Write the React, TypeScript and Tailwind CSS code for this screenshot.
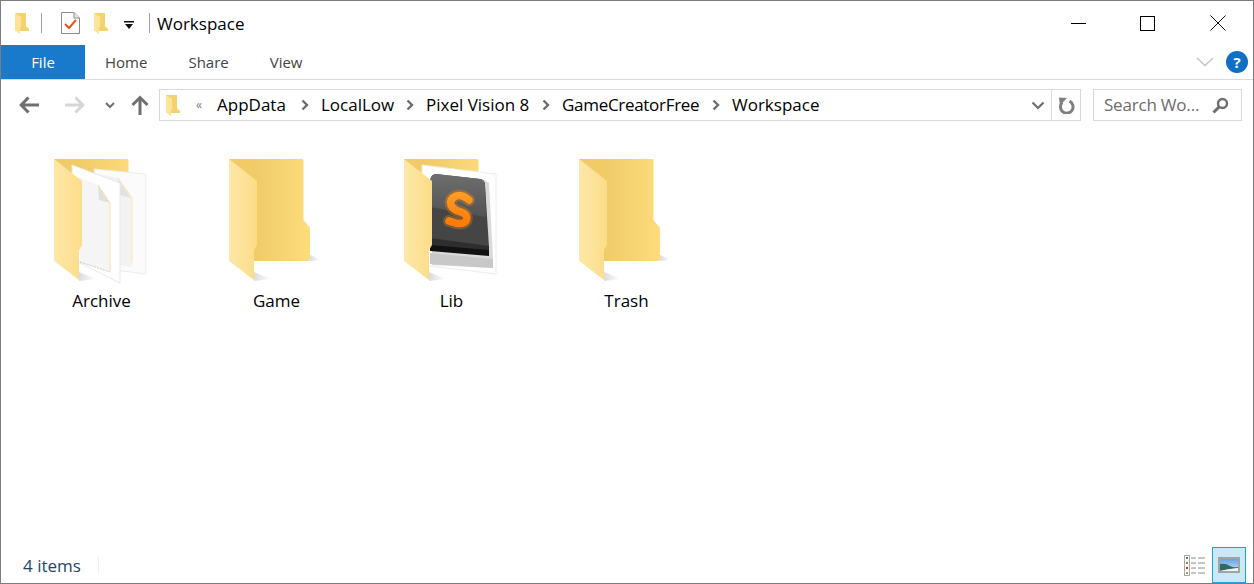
const ui = "font-['Open_Sans','Noto_Sans',sans-serif]";

function SmallFolder() {
  return (
    <svg width="14" height="21" viewBox="0 0 14 21" className="block">
      <path d="M0 0 L11 0 L11 13 L14 16 L14 18 L5 18 L5 21 L0 17 Z" fill="#f6d26f" />
      <path d="M0 0 L6 4 L6 14 L5 15 L5 21 L0 17 Z" fill="#fee39b" />
    </svg>
  );
}

function Chevron() {
  return (
    <svg width="8" height="12" viewBox="0 0 8 12" className="ml-[13px] mr-[12px] shrink-0">
      <path d="M1.5 1.5 L6 6 L1.5 10.5" fill="none" stroke="#6d6d6d" strokeWidth="2.4" />
    </svg>
  );
}

function Arrow({ color, flip }: { color: string; flip?: boolean }) {
  return (
    <svg width="20" height="18" viewBox="0 0 20 18" className={flip ? "rotate-180" : ""}>
      <path d="M9.5 1.5 L2.2 9 L9.5 16.5 M3 9 L20 9" fill="none" stroke={color} strokeWidth="3" />
    </svg>
  );
}

function SublimeCard() {
  return (
    <g>
      <defs>
        <linearGradient id="key-top" x1="0" x2="0" y1="0" y2="1">
          <stop offset="0" stopColor="#6e6e6e" />
          <stop offset="1" stopColor="#525252" />
        </linearGradient>
        <linearGradient id="s-stroke" x1="0" x2="0" y1="0" y2="1">
          <stop offset="0" stopColor="#ff9a22" />
          <stop offset="1" stopColor="#ff7a06" />
        </linearGradient>
      </defs>
      <path d="M18 6 L92 15 L92 115 L18 106 Z" fill="#ffffff" stroke="#ececec" strokeWidth="1" />
      <path d="M28 106 L88 109 L89 100 L85 24 L78 20 L28 16 Z" fill="#d9d9d9" />
      <path d="M26 94 L89 100 L89 109 L26 105 Z" fill="#c8c8c8" />
      <path d="M32 15 L76 20 Q81 21 81 26 L85 88 L85 96 L26 91 L26 22 Q27 15 32 15 Z" fill="#454545" />
      <path d="M32 15 L76 20 Q81 21 81 26 L82 58 L26 48 L26 22 Q27 15 32 15 Z" fill="url(#key-top)" />
      <path d="M26 79 L85 87 L85 92 L26 87 Z" fill="#2e2e2e" />
      <path d="M26 86 L85 91 L85 97 L26 92 Z" fill="#111111" />
      <path d="M65 41 Q58 35 52 37 Q45 40 47 46 Q49 51 57 53 Q65 56 62 62 Q58 67 45 62" fill="none" stroke="#ff8a18" strokeOpacity="0.3" strokeWidth="12" strokeLinecap="round" />
      <path d="M65 41 Q58 35 52 37 Q45 40 47 46 Q49 51 57 53 Q65 56 62 62 Q58 67 45 62" fill="none" stroke="url(#s-stroke)" strokeWidth="7.5" strokeLinecap="round" />
    </g>
  );
}

function PaperSheets() {
  return (
    <g>
      <path d="M40 10 L92 15 L92 115 L60 111 Z" fill="#fbfbfb" stroke="#ededed" strokeWidth="1" />
      <path d="M39 14 L64 19 L78 39 L78 108 L40 103 Z" fill="#f3f3f3" />
      <path d="M64 19 L78 39 L78 104" fill="none" stroke="#fae7aa" strokeWidth="1" />
      <path d="M64 20 L65 36 L77 39 Z" fill="#e2e2e2" />
      <path d="M18 6 L66 24 L66 124 L18 100 Z" fill="#ffffff" stroke="#e9e9e9" strokeWidth="1" />
      <path d="M24 18 L44 26 L56 44 L56 112 L26 103 Z" fill="#f5f5f5" />
      <path d="M44 26 L45 41 L56 44 Z" fill="#e0e0e0" />
      <path d="M44 26 L56 44 L56 112" fill="none" stroke="#fae3a0" strokeWidth="1" />
      <path d="M26 103 L56 113" fill="none" stroke="#c6c6c6" strokeWidth="1" strokeDasharray="2 1" />
    </g>
  );
}

function Folder({ name, inner }: { name: string; inner?: React.ReactNode }) {
  return (
    <div className="flex w-[175px] flex-col items-center">
      <svg width="110" height="125" viewBox="0 0 110 125" className="ml-[15px] block">
        <defs>
          <linearGradient id={`back-${name}`} x1="0" x2="1" y1="0" y2="0">
            <stop offset="0.3" stopColor="#f0cb68" />
            <stop offset="1" stopColor="#fddc7c" />
          </linearGradient>
          <linearGradient id={`front-${name}`} x1="0" x2="1" y1="0" y2="0">
            <stop offset="0" stopColor="#fee8a8" />
            <stop offset="1" stopColor="#fcdc88" />
          </linearGradient>
          <linearGradient id={`shade-${name}`} x1="0" x2="1" y1="0" y2="0">
            <stop offset="0" stopColor="#dcdcdc" />
            <stop offset="1" stopColor="#ffffff" />
          </linearGradient>
        </defs>
        <path d="M81 96 L92 101 L81 102 Z" fill={`url(#shade-${name})`} />
        <path d="M25 113 L42 120 L25 122 Z" fill={`url(#shade-${name})`} />
        <path d="M0 0 L73 0 Q74.5 0 74.5 2 L74.5 61 L81 69 L81 100 Q81 102 79 102 L25 102 L0 90 Z" fill={`url(#back-${name})`} />
        {inner}
        <path d="M0 0 L28 22 L28 86 L25 91 L25 121 L0 102 Z" fill={`url(#front-${name})`} />
      </svg>
      <span className={`${ui} mt-[6px] text-[17px] leading-[22px] text-black`}>{name}</span>
    </div>
  );
}

const crumbs = [
  { label: "AppData", width: "w-[71px]" },
  { label: "LocalLow", width: "w-[72px]" },
  { label: "Pixel Vision 8", width: "w-[103px]" },
  { label: "GameCreatorFree", width: "w-[137px] tracking-[-0.3px]" },
  { label: "Workspace", width: "w-[87px]" },
];

export default function App() {
  return (
    <div className={`${ui} flex h-[584px] w-[1254px] flex-col overflow-hidden border border-[#7d7d7d] bg-white text-black`}>
      {/* title bar */}
      <div className="flex h-[44px] shrink-0 items-center pl-[14px]">
        <SmallFolder />
        <div className="ml-[12px] h-[20px] w-px bg-[#a0a0a0]" />
        <svg width="19" height="22" viewBox="0 0 19 22" className="ml-[19px]">
          <path d="M0.5 0.5 L13 0.5 L18.5 6 L18.5 21.5 L0.5 21.5 Z" fill="#fff" stroke="#8c8c8c" />
          <path d="M13 0.5 L13 6 L18.5 6" fill="#e8e8e8" stroke="#8c8c8c" />
          <path d="M4 12 L8 16 L15 8" fill="none" stroke="#e8561e" strokeWidth="2" />
        </svg>
        <div className="ml-[14px]"><SmallFolder /></div>
        <svg width="10" height="9" viewBox="0 0 10 9" className="ml-[16px] mt-[5px]">
          <rect x="0" y="0" width="10" height="1.5" fill="#111" />
          <path d="M1 3 L9 3 L5 8 Z" fill="#111" />
        </svg>
        <div className="ml-[15px] h-[20px] w-px bg-[#a0a0a0]" />
        <span className="ml-[7px] text-[17px] leading-none">Workspace</span>
        <div className="ml-auto flex items-center">
          <div className="h-px w-[15px] bg-black" />
          <div className="ml-[54px] h-[15px] w-[15px] border border-black" />
          <svg width="16" height="16" viewBox="0 0 16 16" className="ml-[55px] mr-[27px]">
            <path d="M0.5 0.5 L15.5 15.5 M15.5 0.5 L0.5 15.5" stroke="#111" strokeWidth="1" />
          </svg>
        </div>
      </div>

      {/* ribbon tabs */}
      <div className="flex h-[35px] shrink-0 items-center border-b border-[#dadada] text-[15px] text-[#444]">
        <div className="flex h-full w-[84px] items-center justify-center bg-[#1979ca] text-white">File</div>
        <span className="ml-[20px]">Home</span>
        <span className="ml-[41px]">Share</span>
        <span className="ml-[41px]">View</span>
        <div className="ml-auto flex items-center">
          <svg width="18" height="10" viewBox="0 0 18 10" className="mr-[12px]">
            <path d="M1 1 L9 8.5 L17 1" fill="none" stroke="#c3c3c3" strokeWidth="1.4" />
          </svg>
          <div className="mr-[5px] flex h-[22px] w-[22px] items-center justify-center rounded-full bg-[#0f6fc6] text-[15px] font-bold text-white">?</div>
        </div>
      </div>

      {/* address row */}
      <div className="flex h-[50px] shrink-0 items-center">
        <div className="ml-[18px]"><Arrow color="#6f6f6f" /></div>
        <div className="ml-[26px]"><Arrow color="#d6d6d6" flip /></div>
        <svg width="10" height="7" viewBox="0 0 10 7" className="ml-[20px]">
          <path d="M1 1 L5 5 L9 1" fill="none" stroke="#6f6f6f" strokeWidth="2" />
        </svg>
        <svg width="18" height="20" viewBox="0 0 18 20" className="ml-[16px]">
          <path d="M1.5 10 L9 2.5 L16.5 10 M9 3 L9 20" fill="none" stroke="#6f6f6f" strokeWidth="3" />
        </svg>
        <div className="ml-[10px] flex h-[32px] w-[922px] items-center border border-[#d9d9d9]">
          <div className="ml-[6px]"><SmallFolder /></div>
          <span className="ml-[16px] w-[21px] text-[12px] leading-none text-[#7a7a7a]">«</span>
          <div className="flex items-center text-[17px]">
            {crumbs.map((c, i) => (
              <div key={c.label} className="flex items-center">
                <span className={`${c.width} whitespace-nowrap`}>{c.label}</span>
                {i < crumbs.length - 1 && <Chevron />}
              </div>
            ))}
          </div>
          <div className="ml-auto flex h-full items-center">
            <svg width="14" height="9" viewBox="0 0 14 9" className="mr-[6px]">
              <path d="M1.5 1.5 L7 7 L12.5 1.5" fill="none" stroke="#6f6f6f" strokeWidth="2.2" />
            </svg>
            <div className="flex h-full w-[29px] items-center justify-center border-l border-[#d9d9d9]">
              <svg width="17" height="17" viewBox="0 0 17 17">
                <path d="M11.5 4.2 A6.3 6.3 0 1 1 4.2 5.5" fill="none" stroke="#7f7f7f" strokeWidth="3" />
                <path d="M1 0.5 L9 1 L2 8.5 Z" fill="#7f7f7f" />
              </svg>
            </div>
          </div>
        </div>
        <div className="ml-[12px] flex h-[32px] w-[149px] items-center border border-[#d9d9d9] pl-[10px] pr-[12px] text-[17px] text-[#6d6d6d]">
          <span className="whitespace-nowrap tracking-[-0.2px]">Search Wo...</span>
          <svg width="17" height="17" viewBox="0 0 17 17" className="ml-auto">
            <circle cx="10.5" cy="6.5" r="4.5" fill="none" stroke="#6f6f6f" strokeWidth="2.4" />
            <path d="M7 10 L1.5 15.5" stroke="#6f6f6f" strokeWidth="3" />
          </svg>
        </div>
      </div>

      {/* folder grid */}
      <div className="flex flex-1 items-start pl-[13px] pt-[29px]">
        <Folder name="Archive" inner={<PaperSheets />} />
        <Folder name="Game" />
        <Folder name="Lib" inner={<SublimeCard />} />
        <Folder name="Trash" />
      </div>

      {/* status bar */}
      <div className="flex h-[36px] shrink-0 items-center pl-[22px] text-[17px] text-[#24466e]">
        <span className="mt-[2px]">4 items</span>
        <div className="ml-[17px] h-[17px] w-px bg-[#efefef]" />
        <div className="ml-auto flex h-full items-center">
          <svg width="22" height="21" viewBox="0 0 22 21" className="mr-[6px]">
            <rect x="0.5" y="0.5" width="5" height="20" fill="#fff" stroke="#a9a9a9" />
            <rect x="2" y="2" width="2" height="2" fill="#3b78b5" />
            <rect x="2" y="7" width="2" height="2" fill="#a57a3d" />
            <rect x="2" y="12" width="2" height="2" fill="#c02f2f" />
            <rect x="2" y="17" width="2" height="2" fill="#8db24f" />
            <path d="M7 3 H12 M14 3 H21 M7 8 H12 M14 8 H21 M7 13 H12 M14 13 H21 M7 18 H12 M14 18 H21" stroke="#8a8a8a" strokeWidth="1" />
          </svg>
          <div className="mr-[7px] flex h-full w-[34px] items-center justify-center border border-[#26a0da] bg-[#cbe8f6]">
            <svg width="22" height="16" viewBox="0 0 22 16">
              <defs>
                <linearGradient id="sky" x1="0" x2="0" y1="0" y2="1">
                  <stop offset="0" stopColor="#5f9fe0" />
                  <stop offset="1" stopColor="#cfe4f5" />
                </linearGradient>
              </defs>
              <rect x="1" y="1" width="20" height="14" fill="url(#sky)" stroke="#a3a3a3" strokeWidth="2" />
              <path d="M2 7 Q8 6 12 9 Q16 11 20 10 L20 11 Q10 12 2 14 Z" fill="#2f6b63" />
              <path d="M2 14 Q10 12 20 11 L20 14 Z" fill="#eef4f4" />
            </svg>
          </div>
        </div>
      </div>
    </div>
  );
}
